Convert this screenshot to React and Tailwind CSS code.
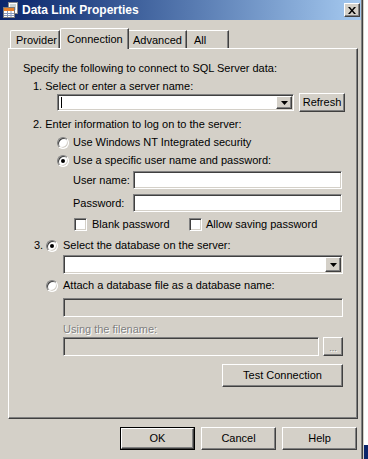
import React from "react";

const sunken =
  "border border-t-[#808080] border-l-[#808080] border-b-white border-r-white shadow-[inset_1px_1px_0_#404040,inset_-1px_-1px_0_#d4d0c8]";
const raised =
  "border border-t-white border-l-white border-b-[#404040] border-r-[#404040] shadow-[inset_-1px_-1px_0_#808080]";

function Arrow() {
  return (
    <svg width="7" height="4" viewBox="0 0 7 4">
      <path d="M0 0h7L3.5 4z" fill="#000" />
    </svg>
  );
}

function Combo({ className = "", caret = false }) {
  return (
    <div className={`${sunken} bg-white flex items-stretch p-[1px] ${className}`}>
      <div className="flex-1 flex items-center pl-[2px]">
        {caret && <div className="w-px h-[11px] bg-black" />}
      </div>
      <div className={`w-[16px] ${raised} bg-[#d4d0c8] flex items-center justify-center`}>
        <Arrow />
      </div>
    </div>
  );
}

function Radio({ checked }) {
  return (
    <div className="w-[12px] h-[12px] rounded-full border border-t-[#808080] border-l-[#808080] border-b-white border-r-white bg-white shadow-[inset_1px_1px_0_#404040,inset_-1px_-1px_0_#d4d0c8] flex items-center justify-center shrink-0">
      {checked && <div className="w-[4px] h-[4px] rounded-full bg-black" />}
    </div>
  );
}

function Check() {
  return <div className={`w-[13px] h-[13px] bg-white ${sunken} shrink-0`} />;
}

function Button({ children, className = "", def = false }) {
  if (def) {
    return (
      <div className={`border border-black ${className}`}>
        <div className={`w-full h-full ${raised} flex items-center justify-center`}>{children}</div>
      </div>
    );
  }
  return <div className={`${raised} flex items-center justify-center ${className}`}>{children}</div>;
}

function TitleIcon() {
  return (
    <svg width="16" height="16" viewBox="0 0 16 16">
      <rect x="5.5" y="0.5" width="9" height="11" fill="#fff" stroke="#8a8a8a" />
      <path d="M7 3h6M7 5h6M7 7h6" stroke="#9aa" />
      <rect x="0.5" y="5.5" width="11" height="10" fill="#fff" stroke="#7a7a7a" />
      <rect x="1" y="6" width="10" height="3" fill="#e8802a" />
      <path d="M1 11.5h10M1 13.5h10M4.5 9v6M8 9v6" stroke="#8899bb" />
    </svg>
  );
}

export default function App() {
  return (
    <div className="w-[368px] h-[459px] flex bg-[#d4d0c8] font-['Liberation_Sans',Arial,sans-serif] text-[11px] leading-[13px] text-black overflow-hidden">
      <div className="w-[363px] h-full border-r border-r-[#404040] shadow-[inset_-1px_0_0_#808080] flex flex-col">
        {/* Title bar */}
        <div className="h-[20px] mr-[1px] bg-linear-to-r from-[#0a246a] to-[#a6caf0] flex items-center pl-[3px] pr-[1px]">
          <TitleIcon />
          <span className="ml-[3px] text-white font-bold text-[12px]">Data Link Properties</span>
          <div className="flex-1" />
          <div className={`w-[16px] h-[14px] bg-[#d4d0c8] ${raised} flex items-center justify-center`}>
            <svg width="8" height="7" viewBox="0 0 8 7">
              <path d="M0 0h2l2 2.5L6 0h2L5 3.5 8 7H6L4 4.5 2 7H0l3-3.5z" fill="#000" />
            </svg>
          </div>
        </div>

        {/* Tabs */}
        <div className="h-[28px] flex items-end pl-[10px] relative z-10">
          <div className="w-[50px] h-[18px] border-t border-l border-r border-t-white border-l-white border-r-[#404040] shadow-[inset_-1px_0_0_#808080] rounded-tl-[2px] flex items-center pl-[5px] pt-[2px]">
            Provider
          </div>
          <div className="w-[69px] h-[21px] -mb-[1px] bg-[#d4d0c8] border-t border-l border-r border-t-white border-l-white border-r-[#404040] shadow-[inset_-1px_0_0_#808080] rounded-tl-[2px] flex items-center pl-[6px]">
            Connection
          </div>
          <div className="w-[58px] h-[18px] border-t border-r border-t-white border-r-[#404040] shadow-[inset_-1px_0_0_#808080] flex items-center pl-[4px] pt-[2px]">
            Advanced
          </div>
          <div className="w-[42px] h-[18px] border-t border-r border-t-white border-r-[#404040] shadow-[inset_-1px_0_0_#808080] flex items-center pl-[7px] pt-[2px]">
            All
          </div>
        </div>

        {/* Panel */}
        <div className={`ml-[8px] w-[350px] h-[371px] ${raised} flex flex-col`}>
          <div className="mt-[13px] ml-[14px]">Specify the following to connect to SQL Server data:</div>
          <div className="mt-[5px] ml-[24px]">1. Select or enter a server name:</div>
          <div className="flex items-start">
            <Combo caret className="mt-[1px] ml-[48px] w-[237px] h-[17px]" />
            <Button className="ml-[5px] w-[46px] h-[19px]">Refresh</Button>
          </div>
          <div className="mt-[6px] ml-[24px]">2. Enter information to log on to the server:</div>
          <div className="mt-[5px] ml-[48px] flex items-center gap-[4px]">
            <Radio />
            <span>Use Windows NT Integrated security</span>
          </div>
          <div className="mt-[5px] ml-[48px] flex items-center gap-[4px]">
            <Radio checked />
            <span>Use a specific user name and password:</span>
          </div>
          <div className="mt-[4px] ml-[64px] flex items-center">
            <span className="w-[60px]">User name:</span>
            <div className={`w-[209px] h-[18px] bg-white ${sunken}`} />
          </div>
          <div className="mt-[5px] ml-[64px] flex items-center">
            <span className="w-[60px]">Password:</span>
            <div className={`w-[209px] h-[18px] bg-white ${sunken}`} />
          </div>
          <div className="mt-[6px] ml-[65px] flex items-center">
            <Check />
            <span className="ml-[5px] w-[97px]">Blank password</span>
            <Check />
            <span className="ml-[4px]">Allow saving password</span>
          </div>
          <div className="mt-[8px] ml-[25px] flex items-center">
            <span className="w-[12px]">3.</span>
            <Radio checked />
            <span className="ml-[5px]">Select the database on the server:</span>
          </div>
          <Combo className="mt-[3px] ml-[54px] w-[280px] h-[19px]" />
          <div className="mt-[5px] ml-[37px] flex items-center">
            <Radio />
            <span className="ml-[5px]">Attach a database file as a database name:</span>
          </div>
          <div className={`mt-[6px] ml-[54px] w-[280px] h-[19px] ${sunken}`} />
          <div className="mt-[6px] ml-[54px] text-[#808080] [text-shadow:1px_1px_0_#fff]">Using the filename:</div>
          <div className="mt-[1px] ml-[54px] flex">
            <div className={`w-[256px] h-[19px] ${sunken}`} />
            <Button className="ml-[4px] w-[20px] h-[19px]">
              <span className="text-[#808080] [text-shadow:1px_1px_0_#fff] text-[9px] leading-[9px] mt-[3px]">...</span>
            </Button>
          </div>
          <Button className="mt-[8px] ml-[213px] w-[121px] h-[23px]">Test Connection</Button>
        </div>

        {/* Bottom buttons */}
        <div className="mt-[8px] flex">
          <Button def className="ml-[120px] w-[75px] h-[23px]">OK</Button>
          <Button className="ml-[6px] w-[75px] h-[23px]">Cancel</Button>
          <Button className="ml-[6px] w-[75px] h-[23px]">Help</Button>
        </div>
      </div>
      <div className="flex-1 flex flex-col bg-white border-l border-l-[#d4d0c8]">
        <div className="flex-1" />
        <div className="h-[14px] bg-[#0a246a]" />
      </div>
    </div>
  );
}
